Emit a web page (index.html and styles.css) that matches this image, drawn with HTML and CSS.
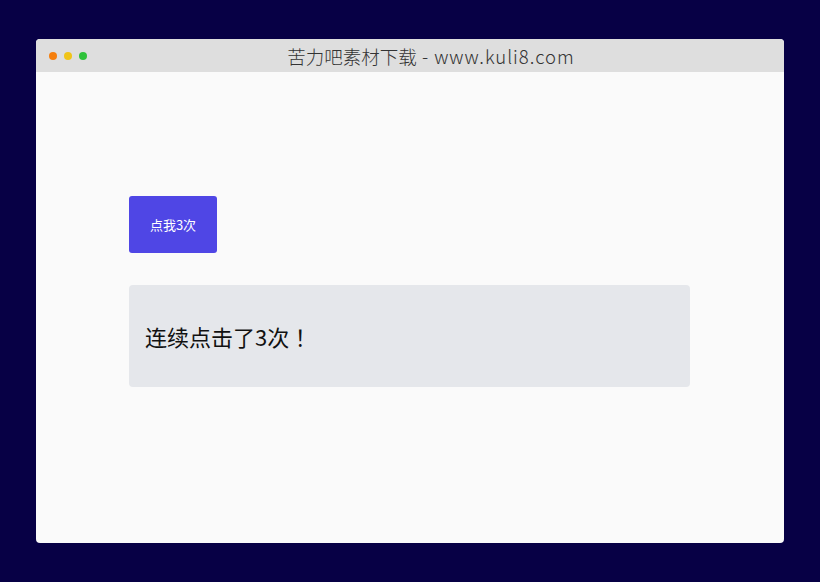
FILE: index.html
```html
<!DOCTYPE html>
<html lang="zh-CN">
<head>
  <meta charset="UTF-8" />
  <title>苦力吧素材下载 - www.kuli8.com</title>
  <link rel="stylesheet" href="styles.css">
</head>
<body>
  <div class="window">
    <div class="titlebar">
      <div class="dots">
        <span class="dot red"></span>
        <span class="dot yellow"></span>
        <span class="dot green"></span>
      </div>
      <div class="title">苦力吧素材下载<span class="site"> - www.kuli8.com</span></div>
    </div>
    <div class="content">
      <button class="btn" id="clickBtn">点我3次</button>
      <div class="result" id="result">连续点击了3次<span class="mark">！</span></div>
    </div>
  </div>
</body>
</html>
```

FILE: styles.css
```css
html, body {
  height: 100%;
}

body {
  margin: 0;
  background: #070045;
  font-family: "Noto Sans CJK SC", "Noto Sans", sans-serif;
  padding: 39px 36px 0 36px;
  box-sizing: border-box;
}

.window {
  width: 748px;
  height: 504px;
  background: #fafafa;
  border-radius: 4px;
  overflow: hidden;
  display: flex;
  flex-direction: column;
}

.titlebar {
  position: relative;
  height: 33px;
  background: #dedede;
  display: flex;
  align-items: center;
  flex-shrink: 0;
}

.dots {
  display: flex;
  gap: 7px;
  padding-left: 13px;
}

.dot {
  width: 8px;
  height: 8px;
  border-radius: 50%;
}

.dot.red { background: #f57f0e; }
.dot.yellow { background: #f0c419; }
.dot.green { background: #2fc23b; }

.title {
  position: absolute;
  left: 42px;
  right: 0;
  text-align: center;
  font-size: 18.5px;
  color: #333;
  font-weight: 300;
}

.title .site {
  letter-spacing: 1px;
}

.content {
  padding: 124px 0 0 93px;
}

.btn {
  display: block;
  width: 88px;
  height: 57px;
  background: #4f46e5;
  color: #fff;
  border: none;
  border-radius: 3px;
  font-family: inherit;
  font-size: 13px;
  cursor: pointer;
}

.result {
  margin-top: 32px;
  width: 561px;
  height: 102px;
  box-sizing: border-box;
  background: #e5e7eb;
  border-radius: 4px;
  padding: 0 16px;
  display: flex;
  align-items: center;
  font-size: 22px;
  color: #111;
}

.result .mark {
  font-family: "Noto Sans CJK JP", sans-serif;
}
```
